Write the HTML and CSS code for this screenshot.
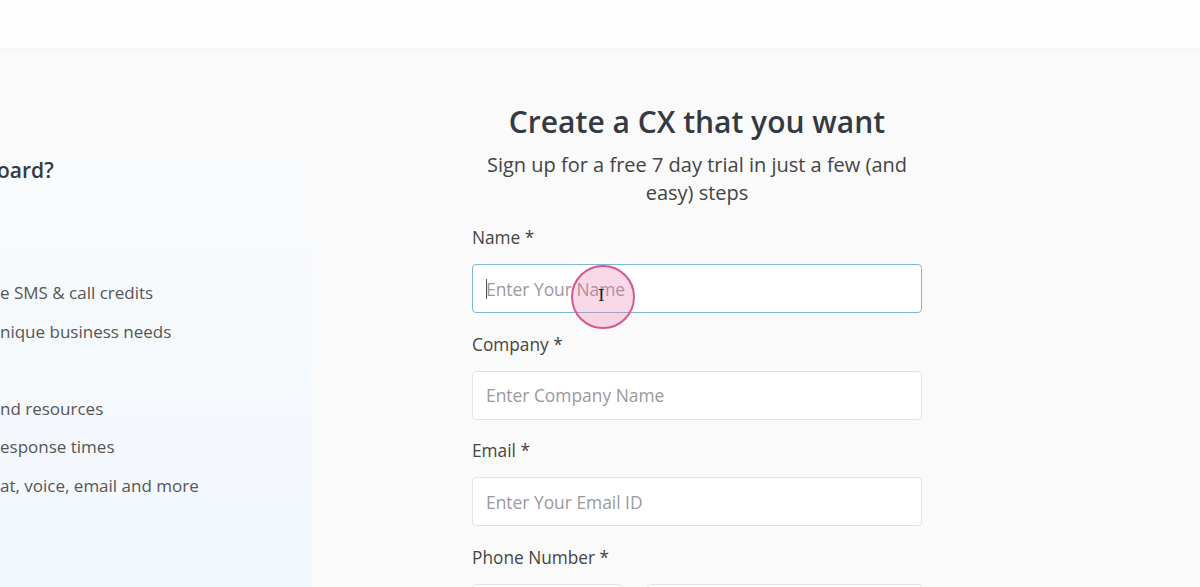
FILE: index.html
```html
<!DOCTYPE html>
<html lang="en">
<head>
    <meta charset="UTF-8">
    <meta name="viewport" content="width=device-width, initial-scale=1.0">
    <title>Sign up - Create a CX that you want</title>
    <link rel="stylesheet" href="styles.css">
</head>
<body>
    <header class="topbar"></header>

    <main class="signup">
        <!-- Left panel, mostly scrolled off to the left -->
        <aside class="perks">
            <h3 class="perks-title">oard?</h3>
            <ul class="perks-list">
                <li>e SMS &amp; call credits</li>
                <li>nique business needs</li>
                <li class="spacer"></li>
                <li>nd resources</li>
                <li>esponse times</li>
                <li>at, voice, email and more</li>
            </ul>
        </aside>

        <section class="form-col">
            <h1>Create a CX that you want</h1>
            <p class="lead">Sign up for a free 7 day trial in just a few (and easy) steps</p>

            <form class="signup-form">
                <label for="name">Name *</label>
                <div class="field-wrap">
                    <input type="text" id="name" class="focused" placeholder="Enter Your Name">
                    <span class="caret"></span>
                    <span class="click-ring"><span class="ibeam">I</span></span>
                </div>

                <label for="company">Company *</label>
                <input type="text" id="company" placeholder="Enter Company Name">

                <label for="email">Email *</label>
                <input type="email" id="email" placeholder="Enter Your Email ID">

                <label for="phone">Phone Number *</label>
                <div class="phone-row">
                    <input type="text" class="code" aria-label="Country code">
                    <input type="tel" id="phone">
                </div>
            </form>
        </section>
    </main>
</body>
</html>
```

FILE: styles.css
```css
/* Base page */
body {
    margin: 0;
    background-color: #fafafa;
    font-family: "Open Sans", "Noto Sans", sans-serif;
    color: #444;
    overflow: hidden;
}

/* Top bar */
.topbar {
    height: 48px;
    background-color: #fdfdfd;
    box-shadow: 0 2px 4px rgba(0, 0, 0, 0.025);
}

.signup {
    display: flex;
    align-items: flex-start;
    height: 539px;
    overflow: hidden;
}

/* Left panel with the trial perks */
.perks {
    width: 313px;
    height: 437px;
    margin-top: 102px;
    padding-top: 6px;
    box-sizing: border-box;
    background: linear-gradient(180deg, #fafbfc 0%, #f5f9fc 45%, #f3f8fc 100%);
}

.perks-title {
    margin: 0 0 0 -3px;
    font-size: 21px;
    line-height: 28px;
    font-weight: 600;
    color: #343a42;
}

.perks-list {
    list-style: none;
    margin: 97px 0 0 0;
    padding: 0;
}

.perks-list li {
    height: 24px;
    margin-bottom: 14.5px;
    font-size: 17px;
    line-height: 24px;
    color: #555;
    white-space: nowrap;
}

/* Form column */
.form-col {
    width: 450px;
    margin-left: 159px;
    padding-top: 54px;
    text-align: center;
}

.form-col h1 {
    margin: 0;
    font-size: 30px;
    line-height: 40px;
    font-weight: 600;
    color: #343a42;
}

.lead {
    margin: 9px 0 0;
    padding: 0 6px;
    font-size: 20px;
    line-height: 28px;
    color: #444;
}

.signup-form {
    margin-top: 19px;
    text-align: left;
}

.signup-form label {
    display: block;
    margin-bottom: 14px;
    font-size: 17.3px;
    line-height: 24px;
    color: #444;
}

.signup-form input {
    display: block;
    width: 100%;
    height: 49px;
    box-sizing: border-box;
    margin: 0 0 19.5px;
    padding: 0 13px;
    border: 1px solid #e2e2e2;
    border-radius: 4px;
    background-color: #fff;
    font-family: inherit;
    font-size: 17.4px;
    color: #444;
    outline: none;
}

.signup-form input::placeholder {
    color: #9a9a9a;
}

.signup-form input.focused {
    border-color: #7fb5d5;
}

.field-wrap {
    position: relative;
}

/* Text caret in the focused field */
.caret {
    position: absolute;
    left: 14px;
    top: 15px;
    width: 1px;
    height: 20px;
    background-color: #555;
}

/* Click highlight from the screen recording */
.click-ring {
    position: absolute;
    left: 99px;
    top: 1px;
    width: 64px;
    height: 64px;
    box-sizing: border-box;
    border: 2px solid #d9558f;
    border-radius: 50%;
    background-color: rgba(233, 120, 170, 0.28);
}

.ibeam {
    position: absolute;
    left: 25px;
    top: 18px;
    font-family: "DejaVu Serif", serif;
    font-size: 17px;
    line-height: 20px;
    color: #222;
}

.phone-row {
    display: flex;
    gap: 25px;
}

.phone-row .code {
    width: 150px;
    flex: none;
}

.phone-row input {
    flex: 1;
}
```
